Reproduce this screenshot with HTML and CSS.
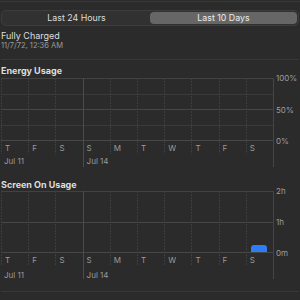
FILE: index.html
```html
<!DOCTYPE html>
<html>
<head>
<meta charset="utf-8">
<link rel="stylesheet" href="styles.css">
</head>
<body>
<div class="page">
  <div class="segmented">
    <div class="seg">Last 24 Hours</div>
    <div class="seg selected">Last 10 Days</div>
  </div>
  <div class="status">
    <div class="status-title">Fully Charged</div>
    <div class="status-date">11/7/72, 12:36 AM</div>
  </div>

  <section class="section energy">
    <h2 class="section-title">Energy Usage</h2>
    <div class="chart-row">
      <div class="chart">
        <div class="col"><div class="col-top"><div class="plot"></div><div class="day">T</div></div><div class="date">Jul 11</div></div>
        <div class="col"><div class="col-top"><div class="plot"></div><div class="day">F</div></div><div class="date"></div></div>
        <div class="col"><div class="col-top"><div class="plot"></div><div class="day">S</div></div><div class="date"></div></div>
        <div class="col week"><div class="col-top"><div class="plot"></div><div class="day">S</div></div><div class="date">Jul 14</div></div>
        <div class="col"><div class="col-top"><div class="plot"></div><div class="day">M</div></div><div class="date"></div></div>
        <div class="col"><div class="col-top"><div class="plot"></div><div class="day">T</div></div><div class="date"></div></div>
        <div class="col"><div class="col-top"><div class="plot"></div><div class="day">W</div></div><div class="date"></div></div>
        <div class="col"><div class="col-top"><div class="plot"></div><div class="day">T</div></div><div class="date"></div></div>
        <div class="col"><div class="col-top"><div class="plot"></div><div class="day">F</div></div><div class="date"></div></div>
        <div class="col"><div class="col-top"><div class="plot"></div><div class="day">S</div></div><div class="date"></div></div>
      </div>
      <div class="axis"><span>100%</span><span>50%</span><span>0%</span></div>
    </div>
  </section>

  <section class="section screen">
    <h2 class="section-title">Screen On Usage</h2>
    <div class="chart-row">
      <div class="chart">
        <div class="col"><div class="col-top"><div class="plot"></div><div class="day">T</div></div><div class="date">Jul 11</div></div>
        <div class="col"><div class="col-top"><div class="plot"></div><div class="day">F</div></div><div class="date"></div></div>
        <div class="col"><div class="col-top"><div class="plot"></div><div class="day">S</div></div><div class="date"></div></div>
        <div class="col week"><div class="col-top"><div class="plot"></div><div class="day">S</div></div><div class="date">Jul 14</div></div>
        <div class="col"><div class="col-top"><div class="plot"></div><div class="day">M</div></div><div class="date"></div></div>
        <div class="col"><div class="col-top"><div class="plot"></div><div class="day">T</div></div><div class="date"></div></div>
        <div class="col"><div class="col-top"><div class="plot"></div><div class="day">W</div></div><div class="date"></div></div>
        <div class="col"><div class="col-top"><div class="plot"></div><div class="day">T</div></div><div class="date"></div></div>
        <div class="col"><div class="col-top"><div class="plot"></div><div class="day">F</div></div><div class="date"></div></div>
        <div class="col"><div class="col-top"><div class="plot"><div class="bar"></div></div><div class="day">S</div></div><div class="date"></div></div>
      </div>
      <div class="axis"><span>2h</span><span>1h</span><span>0m</span></div>
    </div>
  </section>
</div>
</body>
</html>
```

FILE: styles.css
```css
html, body {
  margin: 0;
  padding: 0;
}
body {
  width: 300px;
  height: 300px;
  overflow: hidden;
  background: #2b2b2b;
  color: #dcdcdc;
  font-family: Inter, "Noto Sans", "Liberation Sans", sans-serif;
  padding-top: 1px;
  box-sizing: border-box;
}
.page {
  border-top: 1px solid #393939;
  padding: 0 1px;
}

/* segmented control */
.segmented {
  margin-top: 8px;
  display: grid;
  grid-template-columns: 1fr 1fr;
  background: #313131;
  border: 1px solid #3d3d3d;
  border-radius: 5px;
  padding: 1px;
}
.seg {
  height: 12px;
  line-height: 12px;
  text-align: center;
  font-size: 8.8px;
  color: #dedede;
}
.seg.selected {
  background: #666666;
  border-radius: 4px;
  color: #ececec;
}

/* status */
.status {
  margin-top: 4px;
  padding-bottom: 8px;
  border-bottom: 1px solid #383838;
}
.status-title {
  font-size: 9px;
  line-height: 11px;
  color: #dedede;
}
.status-date {
  font-size: 7.5px;
  line-height: 10px;
  color: #9b9b9b;
}

/* sections */
.section-title {
  margin: 5px 0 1px;
  font-size: 9px;
  line-height: 12px;
  font-weight: 700;
  color: #dedede;
}
.screen .section-title {
  margin-top: 12px;
  margin-bottom: 0;
}
.screen {
  border-bottom: 1px solid #383838;
  padding-bottom: 12px;
}

.chart-row {
  display: flex;
  align-items: flex-start;
}
.chart {
  width: 272px;
  display: grid;
  grid-template-columns: repeat(10, 1fr);
  border-right: 1px solid #454545;
  background-repeat: no-repeat;
}
.energy .chart {
  background-image:
    linear-gradient(#424242, #424242),
    linear-gradient(#3a3a3a, #3a3a3a),
    linear-gradient(#474747, #474747),
    linear-gradient(#3a3a3a, #3a3a3a),
    linear-gradient(#474747, #474747);
  background-size: 100% 1px;
  background-position: 0 0, 0 16px, 0 31px, 0 47px, 0 62px;
}
.screen .chart {
  background-image:
    linear-gradient(#424242, #424242),
    linear-gradient(#474747, #474747),
    linear-gradient(#474747, #474747);
  background-size: 100% 1px;
  background-position: 0 0, 0 31px, 0 61px;
}

.col {
  display: flex;
  flex-direction: column;
}
.col-top {
  padding-left: 1px;
  background-image: repeating-linear-gradient(to bottom, #3e3e3e 0 2px, transparent 2px 3px);
  background-size: 1px 100%;
  background-repeat: no-repeat;
}
.col.week {
  border-left: 1px solid #4b4b4b;
}
.col.week .col-top {
  padding-left: 0;
  background-image: none;
}
.plot {
  height: 63px;
  display: flex;
  align-items: flex-end;
  justify-content: center;
}
.screen .plot {
  height: 62px;
}
.day, .date {
  font-size: 8px;
  color: #9a9a9a;
  padding-left: 3px;
  white-space: nowrap;
}
.day {
  padding-top: 2px;
  height: 11px;
  line-height: 11px;
}
.date {
  padding-top: 2px;
  height: 11px;
  line-height: 11px;
}
.screen .date {
  padding-top: 4px;
  height: 9px;
}
.bar {
  width: 16px;
  height: 7px;
  margin-bottom: 1px;
  margin-right: 1px;
  background: #2f7df6;
  border-radius: 3px 3px 0 0;
}

.axis {
  margin-top: -5px;
  padding-left: 2px;
  height: 73px;
  display: flex;
  flex-direction: column;
  justify-content: space-between;
  font-size: 8px;
  line-height: 10px;
  color: #9d9d9d;
}
.screen .axis {
  height: 72px;
}
```
